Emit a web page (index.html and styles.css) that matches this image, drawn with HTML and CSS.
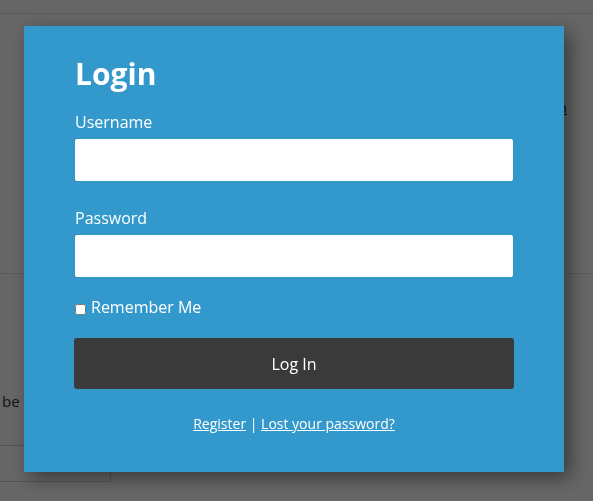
FILE: index.html
```html
<!DOCTYPE html>
<html lang="en">
<head>
  <meta charset="UTF-8">
  <meta name="viewport" content="width=device-width, initial-scale=1.0">
  <title>Login</title>
  <link rel="stylesheet" href="styles.css">
</head>
<body>
  <div class="page">
    <div class="site-header"></div>
    <div class="page-links"><a href="#">Sign in</a></div>
    <div class="page-divider"></div>
    <p class="page-text">be posted</p>
    <div class="page-box"></div>
  </div>

  <div class="overlay">
    <div class="modal">
      <h2>Login</h2>
      <form class="login-form">
        <div class="field">
          <label for="username">Username</label>
          <input type="text" id="username">
        </div>
        <div class="field">
          <label for="password">Password</label>
          <input type="password" id="password">
        </div>
        <label class="remember"><input type="checkbox"> Remember Me</label>
        <button type="button" class="button">Log In</button>
      </form>
      <p class="links"><a href="#">Register</a> | <a href="#">Lost your password?</a></p>
    </div>
  </div>
</body>
</html>
```

FILE: styles.css
```css
:root {
  --blue: #3399cc;
  --dark: #3a3a3a;
  --text-light: #fff;
}

* {
  box-sizing: border-box;
}

body {
  margin: 0;
  font-family: 'Open Sans', 'Noto Sans', sans-serif;
  background: #fff;
  color: #222;
  overflow: hidden;
}

/* page under the overlay */
.site-header {
  height: 14px;
  border-bottom: 1px solid #e2e2e2;
}
.page-links {
  margin-top: 83px;
  padding-right: 26px;
  text-align: right;
  font-size: 15px;
  line-height: 20px;
}
.page-links a {
  color: #111;
}
.page-divider {
  margin-top: 156px;
  border-top: 1px solid #e2e2e2;
}
.page-text {
  margin: 117px 0 0;
  padding-left: 2px;
  font-size: 15px;
  line-height: 20px;
  color: #333;
}
.page-box {
  margin: 34px 0 0 -10px;
  width: 121px;
  height: 37px;
  border: 1px solid #d0d0d0;
  border-radius: 3px;
}

/* modal */
.overlay {
  position: fixed;
  inset: 0;
  background: rgba(0, 0, 0, 0.6);
  padding: 26px 0 0 24px;
}

.modal {
  width: 540px;
  background: var(--blue);
  color: var(--text-light);
  padding: 30px 51px 38px;
  box-shadow: 6px 6px 18px rgba(0, 0, 0, 0.45);
}

.modal h2 {
  margin: 0;
  font-size: 30px;
  line-height: 36px;
  font-weight: 700;
}

.login-form {
  display: flex;
  flex-direction: column;
  margin-top: 19px;
}

.field {
  display: flex;
  flex-direction: column;
  gap: 6px;
  margin-bottom: 26px;
}
.field:last-of-type {
  margin-bottom: 19px;
}

.field label {
  font-size: 16px;
  line-height: 22px;
}

.field input {
  height: 42px;
  border: none;
  border-radius: 2px;
  background: #fff;
  font-size: 16px;
  padding: 0 10px;
}

.remember {
  display: flex;
  align-items: center;
  gap: 5px;
  font-size: 16px;
  line-height: 22px;
}
.remember input {
  margin: 4px 0 0;
  width: 11px;
  height: 11px;
}

.button {
  margin: 20px -1px 0;
  height: 51px;
  background: var(--dark);
  color: var(--text-light);
  border: none;
  border-radius: 3px;
  font-family: inherit;
  font-size: 16px;
  cursor: pointer;
}

.links {
  margin: 25px 0 0;
  text-align: center;
  font-size: 14px;
  line-height: 20px;
}
.links a {
  color: var(--text-light);
}
```
